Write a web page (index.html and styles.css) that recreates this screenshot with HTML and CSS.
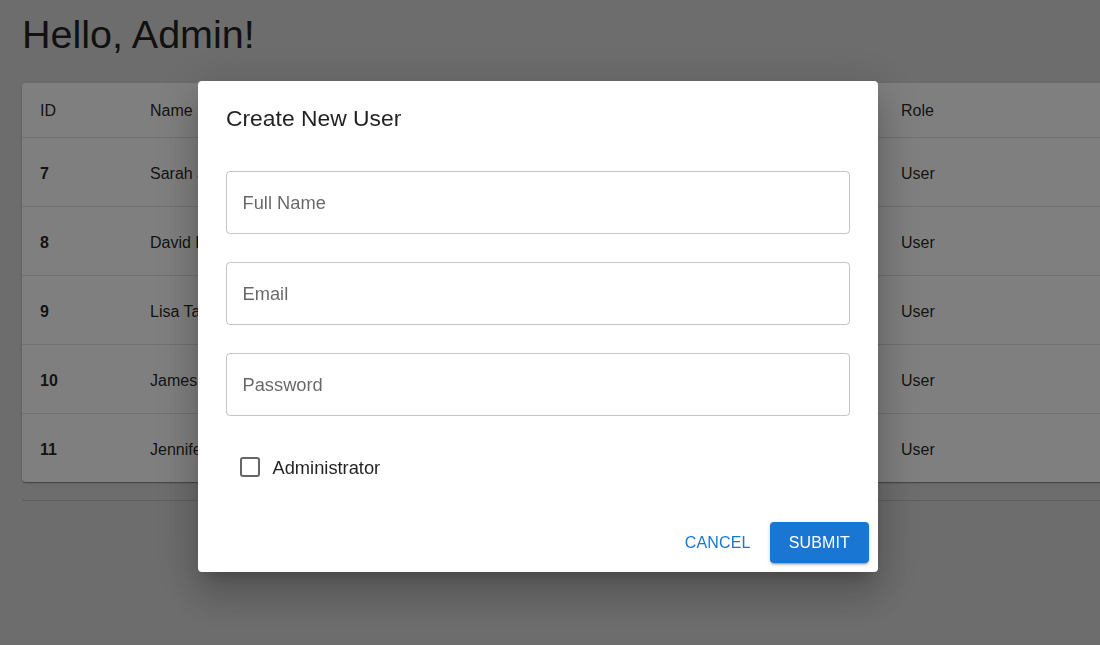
FILE: index.html
```html
<!DOCTYPE html>
<html lang="en">
<head>
<meta charset="utf-8">
<title>Admin</title>
<link rel="stylesheet" href="styles.css">
</head>
<body>
<main class="page">
  <h1 class="greeting">Hello, Admin!</h1>
  <div class="paper">
    <table class="users">
      <colgroup>
        <col class="c-id"><col class="c-name"><col class="c-email"><col class="c-role">
      </colgroup>
      <thead>
        <tr><th class="id">ID</th><th>Name</th><th>Email</th><th>Role</th></tr>
      </thead>
      <tbody>
        <tr><td class="id">7</td><td>Sarah Johnson</td><td>sarah.johnson@example.com</td><td>User</td></tr>
        <tr><td class="id">8</td><td>David Brown</td><td>david.brown@example.com</td><td>User</td></tr>
        <tr><td class="id">9</td><td>Lisa Taylor</td><td>lisa.taylor@example.com</td><td>User</td></tr>
        <tr><td class="id">10</td><td>James Wilson</td><td>james.wilson@example.com</td><td>User</td></tr>
        <tr><td class="id">11</td><td>Jennifer Martinez</td><td>jennifer.martinez@example.com</td><td>User</td></tr>
      </tbody>
    </table>
  </div>
  <hr class="divider">
</main>

<div class="backdrop"></div>

<div class="dialog" role="dialog" aria-labelledby="dlg-title">
  <h2 class="dialog-title" id="dlg-title">Create New User</h2>
  <div class="dialog-content">
    <label class="field"><span class="field-label">Full Name</span></label>
    <label class="field"><span class="field-label">Email</span></label>
    <label class="field"><span class="field-label">Password</span></label>
    <label class="check-row">
      <span class="check-box"></span>
      <span class="check-label">Administrator</span>
    </label>
  </div>
  <div class="dialog-actions">
    <button class="btn btn-text" type="button">Cancel</button>
    <button class="btn btn-contained" type="button">Submit</button>
  </div>
</div>
</body>
</html>
```

FILE: styles.css
```css
html, body {
  margin: 0;
  padding: 0;
  overflow: hidden;
  height: 100%;
}

body {
  background: #dadada;
  font-family: "Liberation Sans", Arial, Helvetica, sans-serif;
  color: rgba(0, 0, 0, 0.87);
}

.page {
  padding: 10px 22px 0 22px;
  width: 1264px;
}

.greeting {
  margin: 0 0 25px 0;
  font-size: 39.5px;
  line-height: 48px;
  font-weight: 400;
}

.paper {
  width: 1242px;
  background: #ffffff;
  border-radius: 4px;
  box-shadow: 0px 2px 1px -1px rgba(0,0,0,0.2), 0px 1px 1px 0px rgba(0,0,0,0.14), 0px 1px 3px 0px rgba(0,0,0,0.12);
  overflow: hidden;
}

.users {
  width: 1242px;
  border-collapse: collapse;
  table-layout: fixed;
  font-size: 16px;
}

.c-id { width: 112px; }
.c-name { width: 330px; }
.c-email { width: 421px; }
.c-role { width: 379px; }

.users th,
.users td {
  text-align: left;
  padding: 0 16px;
  border-bottom: 1px solid #e0e0e0;
  white-space: nowrap;
  overflow: hidden;
  box-sizing: border-box;
}

.users th {
  height: 54px;
  padding-top: 2px;
  font-weight: 400;
}

.users td {
  height: 69px;
  padding-top: 4px;
}

.users th.id,
.users td.id {
  padding-left: 18px;
}

.users tbody tr:last-child td {
  border-bottom: none;
}

.users td.id {
  font-weight: 700;
}

.divider {
  width: 1242px;
  margin: 18px 0 0 0;
  border: none;
  border-top: 1px solid rgba(0, 0, 0, 0.12);
  height: 0;
}

.backdrop {
  position: fixed;
  inset: 0;
  background: rgba(0, 0, 0, 0.5);
}

.dialog {
  position: fixed;
  left: 198px;
  top: 81px;
  width: 680px;
  height: 491px;
  box-sizing: border-box;
  background: #ffffff;
  border-radius: 4px;
  box-shadow: 0px 11px 15px -7px rgba(0,0,0,0.2), 0px 24px 38px 3px rgba(0,0,0,0.14), 0px 9px 46px 8px rgba(0,0,0,0.12);
  display: flex;
  flex-direction: column;
}

.dialog-title {
  margin: 0;
  padding: 19px 28px 0 28px;
  font-size: 22.86px;
  line-height: 36.6px;
  font-weight: 400;
  color: rgba(0, 0, 0, 0.87);
}

.dialog-content {
  padding: 34px 28px 0 28px;
  display: flex;
  flex-direction: column;
  gap: 28px;
}

.field {
  display: flex;
  align-items: center;
  height: 63px;
  box-sizing: border-box;
  border: 1px solid rgba(0, 0, 0, 0.23);
  border-radius: 4px;
  padding: 0 15px 0 15.5px;
}

.field-label {
  font-size: 18.29px;
  color: rgba(0, 0, 0, 0.6);
  line-height: 26px;
  padding-top: 1px;
}

.check-row {
  display: flex;
  align-items: center;
  gap: 13px;
  padding-left: 13.5px;
  margin-top: 9px;
  height: 28px;
}

.check-box {
  width: 20px;
  height: 20px;
  box-sizing: border-box;
  border: 2px solid rgba(0, 0, 0, 0.6);
  border-radius: 3px;
}

.check-label {
  font-size: 18.29px;
  line-height: 26px;
  color: rgba(0, 0, 0, 0.87);
  padding-top: 2px;
}

.dialog-actions {
  margin-top: auto;
  padding: 0 9px 9px 8px;
  display: flex;
  justify-content: flex-end;
  align-items: center;
  gap: 11px;
}

.btn {
  font-family: inherit;
  font-size: 16px;
  letter-spacing: 0.15px;
  text-transform: uppercase;
  height: 41px;
  border: none;
  border-radius: 4px;
  cursor: pointer;
  background: none;
}

.btn-text {
  color: #1976d2;
  padding: 0 8px;
}

.btn-contained {
  background: #1976d2;
  color: #ffffff;
  padding: 0 19px;
  box-shadow: 0px 3px 1px -2px rgba(0,0,0,0.2), 0px 2px 2px 0px rgba(0,0,0,0.14), 0px 1px 5px 0px rgba(0,0,0,0.12);
}
```
